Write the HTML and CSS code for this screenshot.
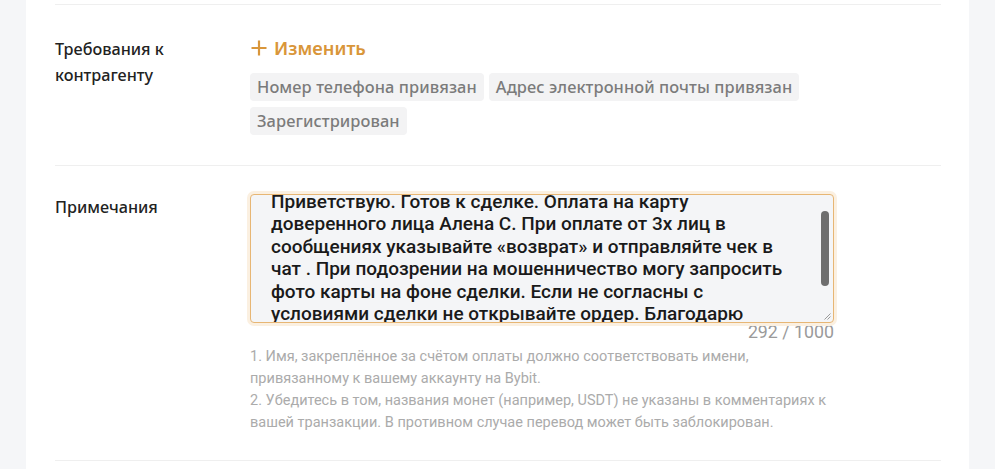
FILE: index.html
```html
<!DOCTYPE html>
<html lang="ru">
<head>
<meta charset="utf-8">
<link rel="stylesheet" href="styles.css">
</head>
<body>
<div class="page">
  <div class="card">
    <div class="divider"></div>
    <div class="row row-req">
      <div class="label">Требования к<br>контрагенту</div>
      <div class="value">
        <div class="change">
          <svg class="plus" width="18" height="18" viewBox="0 0 18 18"><path d="M9 1.5V16.5M1.5 9H16.5" stroke="#d9963a" stroke-width="2.2" fill="none"/></svg>
          <span>Изменить</span>
        </div>
        <div class="tags">
          <span class="tag">Номер телефона привязан</span>
          <span class="tag">Адрес электронной почты привязан</span>
          <span class="tag">Зарегистрирован</span>
        </div>
      </div>
    </div>
    <div class="divider"></div>
    <div class="row row-notes">
      <div class="label">Примечания</div>
      <div class="value">
        <div class="textarea">
          <div class="ta-text">Приветствую. Готов к сделке. Оплата на карту доверенного лица Алена С. При оплате от 3х лиц в сообщениях указывайте «возврат» и отправляйте чек в чат . При подозрении на мошенничество могу запросить фото карты на фоне сделки. Если не согласны с условиями сделки не открывайте ордер. Благодарю</div>
          <div class="scrollbar"></div>
          <svg class="resize" width="8" height="8" viewBox="0 0 8 8"><path d="M7.5 1.5L1.5 7.5M7.5 4.5L4.5 7.5" stroke="#9a9a9a" stroke-width="1" fill="none"/></svg>
        </div>
        <div class="counter">292 / 1000</div>
        <div class="hints">
          <p>1. Имя, закреплённое за счётом оплаты должно соответствовать имени, привязанному к вашему аккаунту на Bybit.</p>
          <p>2. Убедитесь в том, названия монет (например, USDT) не указаны в комментариях к вашей транзакции. В противном случае перевод может быть заблокирован.</p>
        </div>
      </div>
    </div>
    <div class="divider"></div>
  </div>
</div>
</body>
</html>
```
FILE: styles.css
```css
html, body {
  margin: 0;
  padding: 0;
  background: #f5f6f8;
  height: 100%;
  overflow: hidden;
}
.page {
  display: flex;
  height: 469px;
  padding-left: 26px;
  padding-right: 26px;
}
.card {
  flex: 1;
  background: #ffffff;
  padding: 4px 28px 0 29px;
  font-family: "Noto Sans", "Open Sans", sans-serif;
}
.divider {
  height: 1px;
  background: #efefef;
}
.row {
  display: flex;
}
.label {
  width: 195px;
  flex: none;
  font-size: 16.2px;
  line-height: 26px;
  color: #222;
  font-weight: 500;
}
.row-req {
  padding: 31px 0 30px;
}
.value {
  flex: 1;
}
.change {
  display: flex;
  align-items: center;
  gap: 6px;
  color: #d9963a;
  font-size: 18.3px;
  font-weight: 600;
  height: 24px;
}
.change span {
  line-height: 24px;
}
.tags {
  display: flex;
  flex-wrap: wrap;
  gap: 6px 5px;
  margin-top: 13px;
  width: 600px;
}
.tag {
  background: #f3f3f4;
  color: #7b7b7b;
  font-size: 16.4px;
  font-weight: 500;
  line-height: 28px;
  padding: 0 7px;
  border-radius: 4px;
  white-space: nowrap;
  letter-spacing: 0.08px;
}
.row-notes {
  padding: 28px 0 26px;
}
.row-notes .label {
  padding-top: 0;
}
.row-notes .value {
  width: 584px;
  flex: none;
}
.textarea {
  position: relative;
  height: 127px;
  border: 1px solid #e7b674;
  border-radius: 4px;
  box-shadow: 0 0 0 3px #fbf0e1;
  background: #f4f5f7;
  overflow: hidden;
}
.ta-text {
  font-family: "Roboto", "Noto Sans", sans-serif;
  font-weight: 500;
  font-size: 19px;
  line-height: 22.4px;
  color: #1a1a1a;
  padding: 0 40px 0 20px;
  margin-top: -4px;
}
.scrollbar {
  position: absolute;
  right: 4px;
  top: 16px;
  width: 8px;
  height: 75px;
  border-radius: 4px;
  background: #6e6e6e;
}
.resize {
  position: absolute;
  right: 2px;
  bottom: 2px;
}
.counter {
  text-align: right;
  font-family: "Roboto", sans-serif;
  font-size: 17.8px;
  line-height: 20px;
  color: #9a9a9a;
  margin-top: -1px;
}
.hints {
  margin-top: 4px;
  font-family: "Roboto", sans-serif;
  font-size: 14.5px;
  line-height: 22px;
  color: #ababab;
}
.hints p {
  margin: 0;
}
```
